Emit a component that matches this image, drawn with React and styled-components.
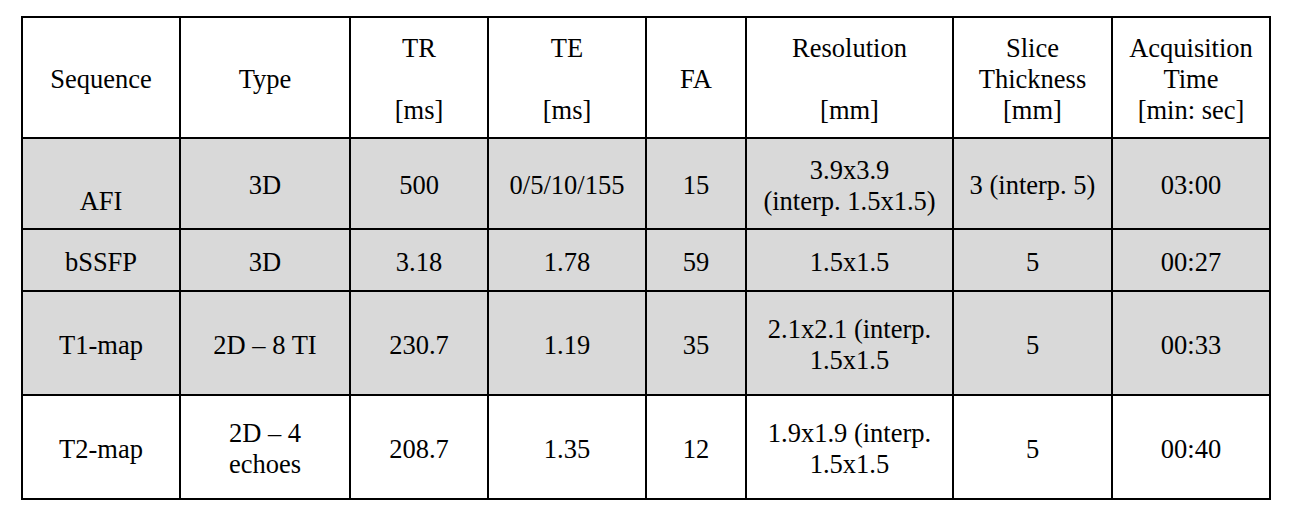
import React from 'react';
import styled, { createGlobalStyle } from 'styled-components';

const GlobalStyle = createGlobalStyle`
  html, body {
    margin: 0;
    padding: 0;
    background: #ffffff;
    font-family: "Liberation Serif", "Times New Roman", serif;
  }
`;

const Page = styled.div`
  padding: 16px 0 0 21px;
  color: #000;
`;

const Grid = styled.div`
  display: inline-grid;
  grid-template-columns: 156px 168px 136px 156px 98px 205px 157px 156px;
  grid-template-rows: 119px 89px 60px 102px 102px;
  gap: 2px;
  padding: 2px;
  background: #000;
`;

const Cell = styled.div`
  display: flex;
  align-items: center;
  justify-content: center;
  text-align: center;
  padding-top: 4px;
  background: ${(p) => (p.$shaded ? '#d9d9d9' : '#ffffff')};
  font-family: "Liberation Serif", "Times New Roman", serif;
  font-size: 26.5px;
  line-height: 31px;
  white-space: nowrap;
`;

const Line = styled.div`
  min-height: 31px;
`;

const header = [
  ['Sequence'],
  ['Type'],
  ['TR', '', '[ms]'],
  ['TE', '', '[ms]'],
  ['FA'],
  ['Resolution', '', '[mm]'],
  ['Slice', 'Thickness', '[mm]'],
  ['Acquisition', 'Time', '[min: sec]'],
];

const rows = [
  {
    shaded: true,
    cells: [
      ['', 'AFI'],
      ['3D'],
      ['500'],
      ['0/5/10/155'],
      ['15'],
      ['3.9x3.9', '(interp. 1.5x1.5)'],
      ['3 (interp. 5)'],
      ['03:00'],
    ],
  },
  {
    shaded: true,
    cells: [['bSSFP'], ['3D'], ['3.18'], ['1.78'], ['59'], ['1.5x1.5'], ['5'], ['00:27']],
  },
  {
    shaded: true,
    cells: [
      ['T1-map'],
      ['2D \u2013 8 TI'],
      ['230.7'],
      ['1.19'],
      ['35'],
      ['2.1x2.1 (interp.', '1.5x1.5'],
      ['5'],
      ['00:33'],
    ],
  },
  {
    shaded: false,
    cells: [
      ['T2-map'],
      ['2D \u2013 4', 'echoes'],
      ['208.7'],
      ['1.35'],
      ['12'],
      ['1.9x1.9 (interp.', '1.5x1.5'],
      ['5'],
      ['00:40'],
    ],
  },
];

function Lines({ lines }) {
  return (
    <div>
      {lines.map((l, i) => (
        <Line key={i}>{l}</Line>
      ))}
    </div>
  );
}

export default function App() {
  return (
    <Page>
      <GlobalStyle />
      <Grid>
        {header.map((lines, i) => (
          <Cell key={'h' + i}>
            <Lines lines={lines} />
          </Cell>
        ))}
        {rows.map((row, r) =>
          row.cells.map((lines, c) => (
            <Cell key={r + '-' + c} $shaded={row.shaded}>
              <Lines lines={lines} />
            </Cell>
          ))
        )}
      </Grid>
    </Page>
  );
}
